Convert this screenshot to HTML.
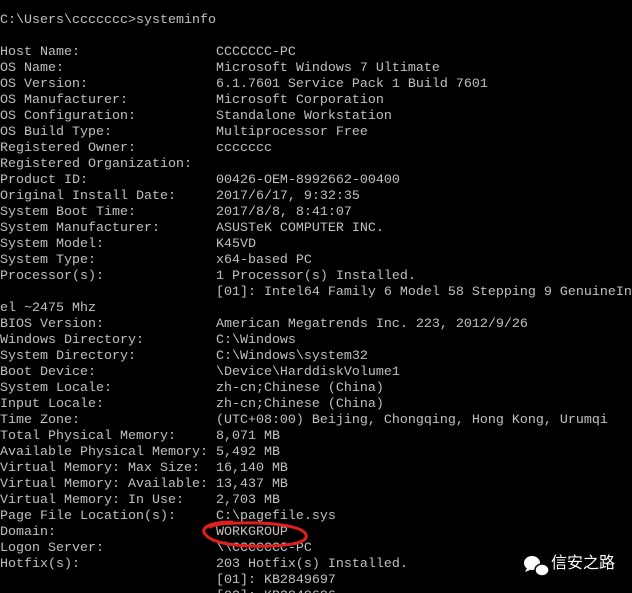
<!DOCTYPE html>
<html><head><meta charset="utf-8"><style>
html,body{margin:0;padding:0;background:#000;width:632px;height:593px;overflow:hidden;position:relative}
pre{position:absolute;left:0;top:13px;margin:0;font-family:"Liberation Mono",monospace;font-size:13.33px;line-height:16px;color:#c0c0c0;white-space:pre}
.wm{position:absolute;left:551px;top:553px;font-family:"Liberation Sans","Noto Sans CJK SC",sans-serif;font-size:16px;color:#fff;line-height:22px}
</style></head><body>
<pre>C:\Users\ccccccc>systeminfo

Host Name:                 CCCCCCC-PC
OS Name:                   Microsoft Windows 7 Ultimate
OS Version:                6.1.7601 Service Pack 1 Build 7601
OS Manufacturer:           Microsoft Corporation
OS Configuration:          Standalone Workstation
OS Build Type:             Multiprocessor Free
Registered Owner:          ccccccc
Registered Organization:
Product ID:                00426-OEM-8992662-00400
Original Install Date:     2017/6/17, 9:32:35
System Boot Time:          2017/8/8, 8:41:07
System Manufacturer:       ASUSTeK COMPUTER INC.
System Model:              K45VD
System Type:               x64-based PC
Processor(s):              1 Processor(s) Installed.
                           [01]: Intel64 Family 6 Model 58 Stepping 9 GenuineIn
el ~2475 Mhz
BIOS Version:              American Megatrends Inc. 223, 2012/9/26
Windows Directory:         C:\Windows
System Directory:          C:\Windows\system32
Boot Device:               \Device\HarddiskVolume1
System Locale:             zh-cn;Chinese (China)
Input Locale:              zh-cn;Chinese (China)
Time Zone:                 (UTC+08:00) Beijing, Chongqing, Hong Kong, Urumqi
Total Physical Memory:     8,071 MB
Available Physical Memory: 5,492 MB
Virtual Memory: Max Size:  16,140 MB
Virtual Memory: Available: 13,437 MB
Virtual Memory: In Use:    2,703 MB
Page File Location(s):     C:\pagefile.sys
Domain:                    WORKGROUP
Logon Server:              \\CCCCCCC-PC
Hotfix(s):                 203 Hotfix(s) Installed.
                           [01]: KB2849697
                           [02]: KB2849696
</pre>
<svg style="position:absolute;left:0;top:0" width="632" height="593">
<path d="M232 522 C210 522 200 528 205 534 C212 544 240 547 270 546 C300 545 310 540 305 533 C300 526 270 522 240 523 C225 523 215 524 210 527" fill="none" stroke="#e0201c" stroke-width="3" stroke-linecap="round"/>
<g fill="#fff">
<ellipse cx="532" cy="563" rx="8" ry="7"/>
<ellipse cx="542" cy="570" rx="7" ry="6" stroke="#000" stroke-width="1.5"/>
<path d="M527 568 l-2 4 5-2z"/>
</g>
</svg>
<div class="wm">信安之路</div>
</body></html>
